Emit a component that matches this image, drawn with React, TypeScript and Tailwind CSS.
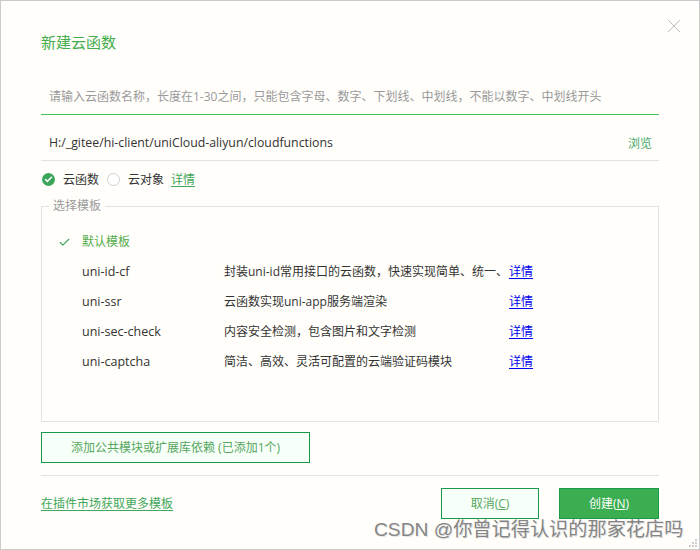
import { Check } from "lucide-react";

const font = "font-['Open_Sans','Noto_Sans_CJK_SC',sans-serif]";

const templates = [
  { name: "uni-id-cf", desc: "封装uni-id常用接口的云函数，快速实现简单、统一、" },
  { name: "uni-ssr", desc: "云函数实现uni-app服务端渲染" },
  { name: "uni-sec-check", desc: "内容安全检测，包含图片和文字检测" },
  { name: "uni-captcha", desc: "简洁、高效、灵活可配置的云端验证码模块" },
];

const App = () => {
  return (
    <div
      className={`relative w-[700px] h-[550px] border border-[#cacaca] bg-[#fffefa] flex flex-col px-[40px] text-[12px] text-[#333] ${font}`}
    >
      {/* close */}
      <svg className="absolute left-[666px] top-[18px]" width="14" height="14" viewBox="0 0 14 14">
        <path d="M1 1L13 13M13 1L1 13" stroke="#bdbdbd" strokeWidth="1" />
      </svg>

      <div className="mt-[31px] h-[20px] leading-[20px] text-[15px] text-[#43ad4c]">新建云函数</div>

      <div className="mt-[28px] h-[35px] border-b border-[#3fc35d] flex items-center pl-[8px] text-[#9a9a9a]">
        请输入云函数名称，长度在1-30之间，只能包含字母、数字、下划线、中划线，不能以数字、中划线开头
      </div>

      <div className="h-[46px] pt-[12px] border-b border-[#e2e2e2] flex items-center justify-between pl-[8px] pr-[7px]">
        <span className="text-[12.3px] text-[#333]">H:/_gitee/hi-client/uniCloud-aliyun/cloudfunctions</span>
        <span className="text-[#45a86a]">浏览</span>
      </div>

      <div className="h-[37px] flex items-center text-[12px]">
        <span className="w-[13px] h-[13px] ml-[1px] rounded-full bg-[#3aa55b] flex items-center justify-center">
          <Check className="w-[9px] h-[9px] text-white" strokeWidth={4} />
        </span>
        <span className="ml-[8px]">云函数</span>
        <span className="ml-[8px] w-[13px] h-[13px] rounded-full border border-[#d0d0d0] bg-white" />
        <span className="ml-[8px]">云对象</span>
        <span className="ml-[7px] text-[#3fa65a] underline underline-offset-2">详情</span>
      </div>

      <fieldset className="h-[224px] border border-[#e2e2e2]">
        <legend className="ml-[7px] px-[4px] leading-[16px] text-[#9a9a9a]">选择模板</legend>
        <div className="pt-[13px] flex flex-col">
          <div className="h-[30px] flex items-center pl-[16px]">
            <span className="w-[24px]">
              <Check className="w-[13px] h-[13px] text-[#3da35a]" strokeWidth={2} />
            </span>
            <span className="text-[#53ad4b]">默认模板</span>
          </div>
          {templates.map((t) => (
            <div key={t.name} className="h-[30px] flex items-center pl-[40px]">
              <span className="w-[142px] text-[12.5px]">{t.name}</span>
              <span className="w-[285px] whitespace-nowrap">{t.desc}</span>
              <span className="text-[#0000ee] underline underline-offset-2">详情</span>
            </div>
          ))}
        </div>
      </fieldset>

      <button className="mt-[10px] w-[269px] h-[31px] border border-[#17994a] bg-[#f7fff9] text-[#56a65d] text-[12px]">
        添加公共模块或扩展库依赖 (已添加1个)
      </button>

      <div className="mt-[12px] border-t border-[#e2e2e2]" />

      <div className="mt-[12px] h-[31px] flex items-center">
        <span className="text-[#3fa65a] underline underline-offset-2">在插件市场获取更多模板</span>
        <div className="ml-auto flex gap-[20px]">
          <button className="w-[98px] h-[31px] border border-[#17994a] bg-[#f7fff9] text-[#56a65d]">
            取消(<span className="underline">C</span>)
          </button>
          <button className="w-[100px] h-[31px] border border-[#1c9a48] bg-[#3aae50] text-white">
            创建(<span className="underline">N</span>)
          </button>
        </div>
      </div>

      {/* watermark */}
      <div className="absolute left-[373px] top-[516px] text-[19.2px] leading-[26px] text-[#858585] font-['Liberation_Sans','Noto_Sans_CJK_SC',sans-serif] [text-shadow:1px_1px_0_#e6e6e6]">
        CSDN @你曾记得认识的那家花店吗
      </div>

      {/* resize grip */}
      <svg className="absolute right-[1px] bottom-[1px]" width="10" height="10" viewBox="0 0 10 10">
        <g fill="#cfcfcf">
          <rect x="7" y="1" width="2" height="2" />
          <rect x="4" y="4" width="2" height="2" />
          <rect x="7" y="4" width="2" height="2" />
          <rect x="1" y="7" width="2" height="2" />
          <rect x="4" y="7" width="2" height="2" />
          <rect x="7" y="7" width="2" height="2" />
        </g>
      </svg>
    </div>
  );
};

export default App;
